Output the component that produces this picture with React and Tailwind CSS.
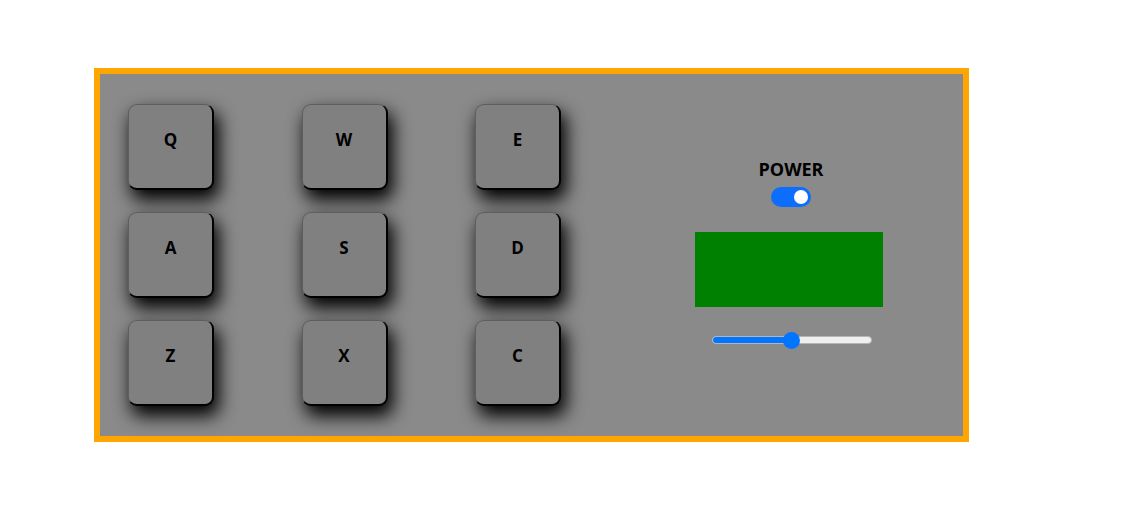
import React from "react";

const rows = [
  ["Q", "W", "E"],
  ["A", "S", "D"],
  ["Z", "X", "C"],
];

function Key({ k }) {
  return (
    <div className="w-[86px] h-[86px] rounded-[9px] bg-[#808080] border border-[#5e5e5e] border-b-[2px] border-r-[2px] border-b-black border-r-black shadow-[4px_9px_18px_1px_#000] flex justify-center pt-[23px] box-border">
      <span className="text-[17px] font-bold text-black leading-[24px]">{k}</span>
    </div>
  );
}

export default function App() {
  return (
    <div className="w-[1124px] h-[511px] bg-white font-['Open_Sans',sans-serif] pt-[68px] pl-[94px] box-border">
      <div className="w-[875px] h-[374px] border-[6px] border-[#ffa500] bg-[#8a8a8a] box-border flex">
        <div className="pl-[28px] pt-[30px] grid grid-cols-[86px_86px_86px] gap-x-[87.5px] gap-y-[22px] content-start">
          {rows.flat().map((k) => (
            <Key key={k} k={k} />
          ))}
        </div>
        <div className="ml-[134px] w-[188px] flex flex-col items-center pt-[83px]">
          <div className="ml-[4px] text-[18px] font-bold text-black leading-[24px]">POWER</div>
          <div className="ml-[4px] mt-[6px] w-[40px] h-[20px] rounded-full bg-[#0d6efd] flex items-center justify-end pr-[3px] box-border">
            <div className="w-[14px] h-[14px] rounded-full bg-white" />
          </div>
          <div className="mt-[25px] w-[188px] h-[75px] bg-[#008000]" />
          <div className="ml-[6px] mt-[25px] relative w-[160px] h-[16px] flex items-center">
            <div className="w-full h-[8px] rounded-full bg-[#efefef] border border-[#b5b5b5] overflow-hidden box-border">
              <div className="w-[50%] h-full bg-[#0075ff]" />
            </div>
            <div className="absolute left-[71px] top-0 w-[17px] h-[17px] rounded-full bg-[#0075ff]" />
          </div>
        </div>
      </div>
    </div>
  );
}
